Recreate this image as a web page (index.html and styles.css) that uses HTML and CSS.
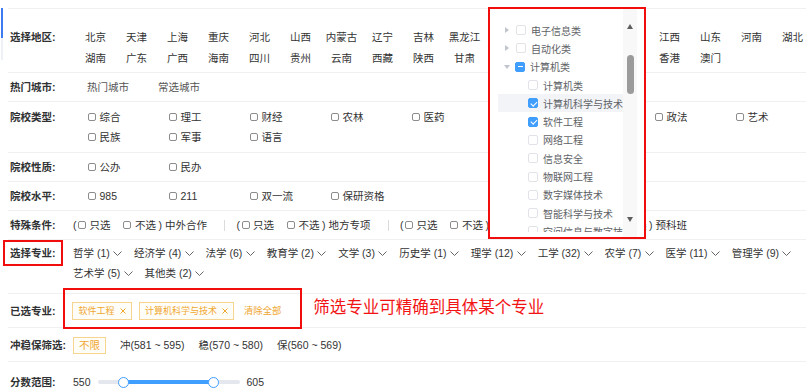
FILE: index.html
```html
<!DOCTYPE html>
<html lang="zh-CN">
<head>
    <meta charset="UTF-8">
    <title>院校筛选</title>
    <link rel="stylesheet" href="styles.css">
</head>
<body>

<div class="page">
    <div class="filter">
        <!-- 选择地区 -->
        <div class="row row-region">
            <div class="label">选择地区:</div>
            <ul class="region-list">
                <li>北京</li><li>天津</li><li>上海</li><li>重庆</li><li>河北</li><li>山西</li>
                <li>内蒙古</li><li>辽宁</li><li>吉林</li><li>黑龙江</li><li>江苏</li><li>浙江</li>
                <li>安徽</li><li>福建</li><li>江西</li><li>山东</li><li>河南</li><li>湖北</li>
                <li>湖南</li><li>广东</li><li>广西</li><li>海南</li><li>四川</li><li>贵州</li>
                <li>云南</li><li>西藏</li><li>陕西</li><li>甘肃</li><li>青海</li><li>宁夏</li>
                <li>新疆</li><li>台湾</li><li>香港</li><li>澳门</li>
            </ul>
        </div>

        <div class="row">
            <div class="label">热门城市:</div>
            <div class="tabs">
                <span>热门城市</span>
                <span>常选城市</span>
            </div>
        </div>

        <div class="row row-double">
            <div class="label">院校类型:</div>
            <ul class="check-list">
                <li><i class="chk"></i>综合</li>
                <li><i class="chk"></i>理工</li>
                <li><i class="chk"></i>财经</li>
                <li><i class="chk"></i>农林</li>
                <li><i class="chk"></i>医药</li>
                <li><i class="chk"></i>师范</li>
                <li><i class="chk"></i>体育</li>
                <li><i class="chk"></i>政法</li>
                <li><i class="chk"></i>艺术</li>
                <li><i class="chk"></i>民族</li>
                <li><i class="chk"></i>军事</li>
                <li><i class="chk"></i>语言</li>
            </ul>
        </div>

        <div class="row">
            <div class="label">院校性质:</div>
            <ul class="check-list">
                <li><i class="chk"></i>公办</li>
                <li><i class="chk"></i>民办</li>
            </ul>
        </div>

        <div class="row">
            <div class="label">院校水平:</div>
            <ul class="check-list">
                <li><i class="chk"></i>985</li>
                <li><i class="chk"></i>211</li>
                <li><i class="chk"></i>双一流</li>
                <li><i class="chk"></i>保研资格</li>
            </ul>
        </div>

        <div class="row">
            <div class="label">特殊条件:</div>
            <div class="special">
                <div class="special-group">
                    <span>(</span><i class="chk"></i><span class="opt">只选</span>
                    <i class="chk chk-second"></i><span class="opt">不选</span>
                    <span class="paren-end">)</span><span class="sp-name">中外合作</span>
                </div>
                <span class="divider"></span>
                <div class="special-group">
                    <span>(</span><i class="chk"></i><span class="opt">只选</span>
                    <i class="chk chk-second"></i><span class="opt">不选</span>
                    <span class="paren-end">)</span><span class="sp-name">地方专项</span>
                </div>
                <span class="divider"></span>
                <div class="special-group">
                    <span>(</span><i class="chk"></i><span class="opt">只选</span>
                    <i class="chk chk-second"></i><span class="opt">不选</span>
                    <span class="paren-end">)</span><span class="sp-name">高校专项</span>
                </div>
                <span class="divider"></span>
                <div class="special-group">
                    <span>(</span><i class="chk"></i><span class="opt">只选</span>
                    <i class="chk chk-second"></i><span class="opt">不选</span>
                    <span class="paren-end">)</span><span class="sp-name">预科班</span>
                </div>
            </div>
        </div>

        <div class="row row-major">
            <div class="label label-marked">选择专业:</div>
            <ul class="major-list">
                <li>哲学 (1)<svg class="chev" viewBox="0 0 9 5"><polyline points="0.5,0.5 4.5,4.5 8.5,0.5"/></svg></li>
                <li>经济学 (4)<svg class="chev" viewBox="0 0 9 5"><polyline points="0.5,0.5 4.5,4.5 8.5,0.5"/></svg></li>
                <li>法学 (6)<svg class="chev" viewBox="0 0 9 5"><polyline points="0.5,0.5 4.5,4.5 8.5,0.5"/></svg></li>
                <li>教育学 (2)<svg class="chev" viewBox="0 0 9 5"><polyline points="0.5,0.5 4.5,4.5 8.5,0.5"/></svg></li>
                <li>文学 (3)<svg class="chev" viewBox="0 0 9 5"><polyline points="0.5,0.5 4.5,4.5 8.5,0.5"/></svg></li>
                <li>历史学 (1)<svg class="chev" viewBox="0 0 9 5"><polyline points="0.5,0.5 4.5,4.5 8.5,0.5"/></svg></li>
                <li>理学 (12)<svg class="chev" viewBox="0 0 9 5"><polyline points="0.5,0.5 4.5,4.5 8.5,0.5"/></svg></li>
                <li>工学 (32)<svg class="chev" viewBox="0 0 9 5"><polyline points="0.5,0.5 4.5,4.5 8.5,0.5"/></svg></li>
                <li>农学 (7)<svg class="chev" viewBox="0 0 9 5"><polyline points="0.5,0.5 4.5,4.5 8.5,0.5"/></svg></li>
                <li>医学 (11)<svg class="chev" viewBox="0 0 9 5"><polyline points="0.5,0.5 4.5,4.5 8.5,0.5"/></svg></li>
                <li>管理学 (9)<svg class="chev" viewBox="0 0 9 5"><polyline points="0.5,0.5 4.5,4.5 8.5,0.5"/></svg></li>
                <li>艺术学 (5)<svg class="chev" viewBox="0 0 9 5"><polyline points="0.5,0.5 4.5,4.5 8.5,0.5"/></svg></li>
                <li>其他类 (2)<svg class="chev" viewBox="0 0 9 5"><polyline points="0.5,0.5 4.5,4.5 8.5,0.5"/></svg></li>
            </ul>
        </div>

        <div class="row row-selected">
            <div class="label">已选专业:</div>
            <div class="selected">
                <span class="tag">软件工程<svg class="tag-x" viewBox="0 0 6 6"><path d="M0.5 0.5L5.5 5.5M5.5 0.5L0.5 5.5"/></svg></span>
                <span class="tag">计算机科学与技术<svg class="tag-x" viewBox="0 0 6 6"><path d="M0.5 0.5L5.5 5.5M5.5 0.5L0.5 5.5"/></svg></span>
                <span class="clear-all">清除全部</span>
            </div>
            <span class="note">筛选专业可精确到具体某个专业</span>
        </div>

        <div class="row row-level">
            <div class="label">冲稳保筛选:</div>
            <div class="levels">
                <span class="level-on">不限</span>
                <span>冲(581 ~ 595)</span>
                <span>稳(570 ~ 580)</span>
                <span>保(560 ~ 569)</span>
            </div>
        </div>

        <div class="row row-score">
            <div class="label">分数范围:</div>
            <div class="score">
                <span>550</span>
                <div class="slider">
                    <div class="slider-bar"></div>
                    <i class="slider-dot dot-left"></i>
                    <i class="slider-dot dot-right"></i>
                </div>
                <span>605</span>
            </div>
        </div>
    </div>

    <!-- 专业下拉树 -->
    <div class="dropdown">
        <ul class="tree">
            <li class="node"><i class="arrow"></i><i class="box"></i>电子信息类</li>
            <li class="node"><i class="arrow"></i><i class="box"></i>自动化类</li>
            <li class="node"><i class="arrow arrow-open"></i><i class="box box-half"></i>计算机类</li>
            <li class="node child"><i class="box"></i>计算机类</li>
            <li class="node child hover"><i class="box box-on"></i>计算机科学与技术</li>
            <li class="node child"><i class="box box-on"></i>软件工程</li>
            <li class="node child"><i class="box"></i>网络工程</li>
            <li class="node child"><i class="box"></i>信息安全</li>
            <li class="node child"><i class="box"></i>物联网工程</li>
            <li class="node child"><i class="box"></i>数字媒体技术</li>
            <li class="node child"><i class="box"></i>智能科学与技术</li>
            <li class="node child"><i class="box"></i>空间信息与数字技术</li>
        </ul>
        <div class="scrollbar">
            <i class="scroll-up"></i>
            <i class="scroll-thumb"></i>
            <i class="scroll-down"></i>
        </div>
    </div>
</div>

</body>
</html>
```

FILE: styles.css
```css
html, body, div, ul, li, p, span {
    margin: 0;
    padding: 0;
}
html, body {
    overflow: hidden;
}
body {
    width: 806px;
    height: 388px;
    background: #fff;
    color: #333;
    font-family: "Liberation Sans", "Noto Sans CJK SC", sans-serif;
    font-size: 10.5px;
}
ul {
    list-style-type: none;
}
i {
    display: inline-block;
    font-style: normal;
}

.page {
    position: relative;
    padding: 8px 0 0 8px;
}
/* 左侧的蓝色标记 */
.page::before {
    content: "";
    position: absolute;
    left: 1px;
    top: 8px;
    width: 2px;
    height: 30px;
    background: #3d7cf0;
}
.page::after {
    content: "";
    position: absolute;
    left: 1px;
    top: 38px;
    width: 2px;
    height: 22px;
    background: #eef1f6;
}

.filter {
    border-top: 1px solid #f0f0f0;
}
.row {
    display: flex;
    padding: 4px 0;
    line-height: 20px;
    border-bottom: 1px solid #f0f0f0;
}
.label {
    flex: none;
    width: 63px;
    padding-left: 2px;
    font-weight: bold;
    color: #303133;
}

/* 选择地区 */
.row-region {
    padding: 18px 0 3px;
    line-height: 21px;
}
.region-list {
    display: grid;
    grid-template-columns: repeat(18, 41px);
    padding-left: 2px;
}
.region-list>li {
    text-align: center;
    white-space: nowrap;
}

.tabs {
    padding-left: 1px;
    color: #555;
}
.tabs>span {
    padding: 0 13px;
}

/* 复选 */
.row-double {
    padding: 5px 0;
}
.check-list {
    display: grid;
    grid-template-columns: repeat(9, 81px);
}
.check-list>li {
    display: flex;
    align-items: center;
    padding-left: 15px;
    white-space: nowrap;
}
.chk {
    width: 8px;
    height: 8px;
    box-sizing: border-box;
    border: 1px solid #8c8c8c;
    border-radius: 2px;
    margin-right: 3.5px;
}

/* 特殊条件 */
.special {
    display: flex;
    align-items: center;
    white-space: nowrap;
}
.special-group {
    flex: none;
    width: 151px;
    display: flex;
    align-items: center;
}
.special-group>.chk {
    margin-left: 1.5px;
}
.special-group>.chk-second {
    margin-left: 12.5px;
    margin-right: 4px;
}
.paren-end {
    margin-left: 2.5px;
}
.sp-name {
    margin-left: 3px;
}
.divider {
    flex: none;
    width: 1px;
    height: 11px;
    background: #dcdcdc;
    margin-right: 11.5px;
}

/* 选择专业 */
.row-major {
    padding: 3px 0 10px;
}
.label-marked {
    position: relative;
    align-self: flex-start;
    height: 20px;
}
.label-marked::after {
    content: "";
    position: absolute;
    left: -5px;
    right: 10px;
    top: -3px;
    bottom: -3px;
    border: 2px solid #f20d0d;
}
.major-list {
    display: flex;
    flex-wrap: wrap;
    column-gap: 12px;
}
.major-list>li {
    display: flex;
    align-items: center;
    white-space: nowrap;
}
.chev {
    width: 9px;
    height: 5px;
    margin-left: 3.3px;
    fill: none;
    stroke: #666;
    stroke-width: 1;
}

/* 已选专业 */
.row-selected {
    align-items: center;
    padding: 7px 0 6px;
}
.selected {
    position: relative;
    display: flex;
    align-items: center;
    margin-left: -1px;
}
.selected::after {
    content: "";
    position: absolute;
    left: -9px;
    right: -21px;
    top: -13px;
    bottom: -8px;
    border: 2px solid #f20d0d;
}
.tag {
    display: flex;
    align-items: center;
    height: 18px;
    box-sizing: border-box;
    padding: 0 5px 0 5.5px;
    margin-right: 7px;
    border: 1px solid #f7d48f;
    background: #fffdf7;
    color: #f0a62f;
    font-size: 9px;
}
.tag-x {
    width: 6px;
    height: 6px;
    margin-left: 5px;
    stroke: #f0a62f;
    stroke-width: 1;
}
.clear-all {
    margin-left: 3px;
    color: #f0a62f;
    font-size: 9.3px;
}
.note {
    margin-left: 32px;
    margin-top: -8px;
    line-height: 18px;
    color: #f21414;
    font-size: 16.5px;
    white-space: nowrap;
}

/* 冲稳保 */
.row-level {
    align-items: center;
    padding: 7px 0 6px;
}
.levels {
    display: flex;
    align-items: center;
    white-space: nowrap;
}
.levels>span {
    margin-right: 14px;
}
.levels>.level-on {
    height: 17px;
    line-height: 15px;
    box-sizing: border-box;
    padding: 0 5px;
    border: 1px solid #f7d48f;
    background: #fffdf7;
    color: #f0a62f;
}

/* 分数范围 */
.row-score {
    padding: 10px 0;
    border-bottom: none;
}
.score {
    display: flex;
    align-items: center;
}
.slider {
    position: relative;
    width: 142px;
    height: 4px;
    margin: 0 7px;
    border-radius: 2px;
    background: #e4e7ed;
}
.slider-bar {
    position: absolute;
    left: 25.5px;
    width: 90px;
    top: 0;
    height: 4px;
    background: #409eff;
}
.slider-dot {
    position: absolute;
    top: -3.5px;
    width: 11px;
    height: 11px;
    box-sizing: border-box;
    border: 1.5px solid #409eff;
    border-radius: 50%;
    background: #fff;
}
.dot-left {
    left: 20px;
}
.dot-right {
    left: 110px;
}

/* 下拉树 */
.dropdown {
    position: absolute;
    left: 488px;
    top: 7px;
    width: 158px;
    height: 232px;
    box-sizing: border-box;
    border: 2px solid #f20d0d;
    background: #fff;
    overflow: hidden;
    display: flex;
    align-items: flex-start;
}
.tree {
    flex: none;
    width: 133px;
    height: 223px;
    box-sizing: border-box;
    padding: 12px 0 0 8px;
    overflow: hidden;
}
.node {
    display: flex;
    align-items: center;
    height: 18.3px;
    padding-left: 7px;
    color: #606266;
    font-size: 10px;
    white-space: nowrap;
    overflow: hidden;
}
.node.child {
    padding-left: 30px;
}
.node.hover {
    background: #f2f4f8;
}
.arrow {
    width: 0;
    height: 0;
    border-left: 4px solid #c0c4cc;
    border-top: 3px solid transparent;
    border-bottom: 3px solid transparent;
    margin: 0 7px 0 0;
}
.arrow-open {
    border-top: 4px solid #c0c4cc;
    border-left: 3px solid transparent;
    border-right: 3px solid transparent;
    border-bottom: none;
    margin: 0 5px 0 -1px;
}
.box {
    position: relative;
    flex: none;
    width: 10px;
    height: 10px;
    box-sizing: border-box;
    border: 1px solid #e1e3e8;
    border-radius: 2px;
    background: #fff;
    margin-right: 5px;
}
.box-on, .box-half {
    border-color: #409eff;
    background: #409eff;
}
.box-on::after {
    content: "";
    position: absolute;
    left: 2.5px;
    top: 0.5px;
    width: 2.5px;
    height: 5px;
    border: solid #fff;
    border-width: 0 1px 1px 0;
    transform: rotate(45deg);
}
.box-half::after {
    content: "";
    position: absolute;
    left: 1.5px;
    right: 1.5px;
    top: 3.5px;
    height: 1px;
    background: #fff;
}
.scrollbar {
    flex: none;
    width: 14px;
    height: 100%;
    display: flex;
    flex-direction: column;
    align-items: center;
    background: #f8f8f8;
}
.scroll-up {
    margin-top: 15px;
    width: 0;
    height: 0;
    border-bottom: 5px solid #5f5f5f;
    border-left: 3.5px solid transparent;
    border-right: 3.5px solid transparent;
}
.scroll-thumb {
    margin-top: 26px;
    width: 7px;
    height: 39px;
    border-radius: 3.5px;
    background: #9b9b9b;
}
.scroll-down {
    margin-top: auto;
    margin-bottom: 15px;
    width: 0;
    height: 0;
    border-top: 5px solid #5f5f5f;
    border-left: 3.5px solid transparent;
    border-right: 3.5px solid transparent;
}
```
